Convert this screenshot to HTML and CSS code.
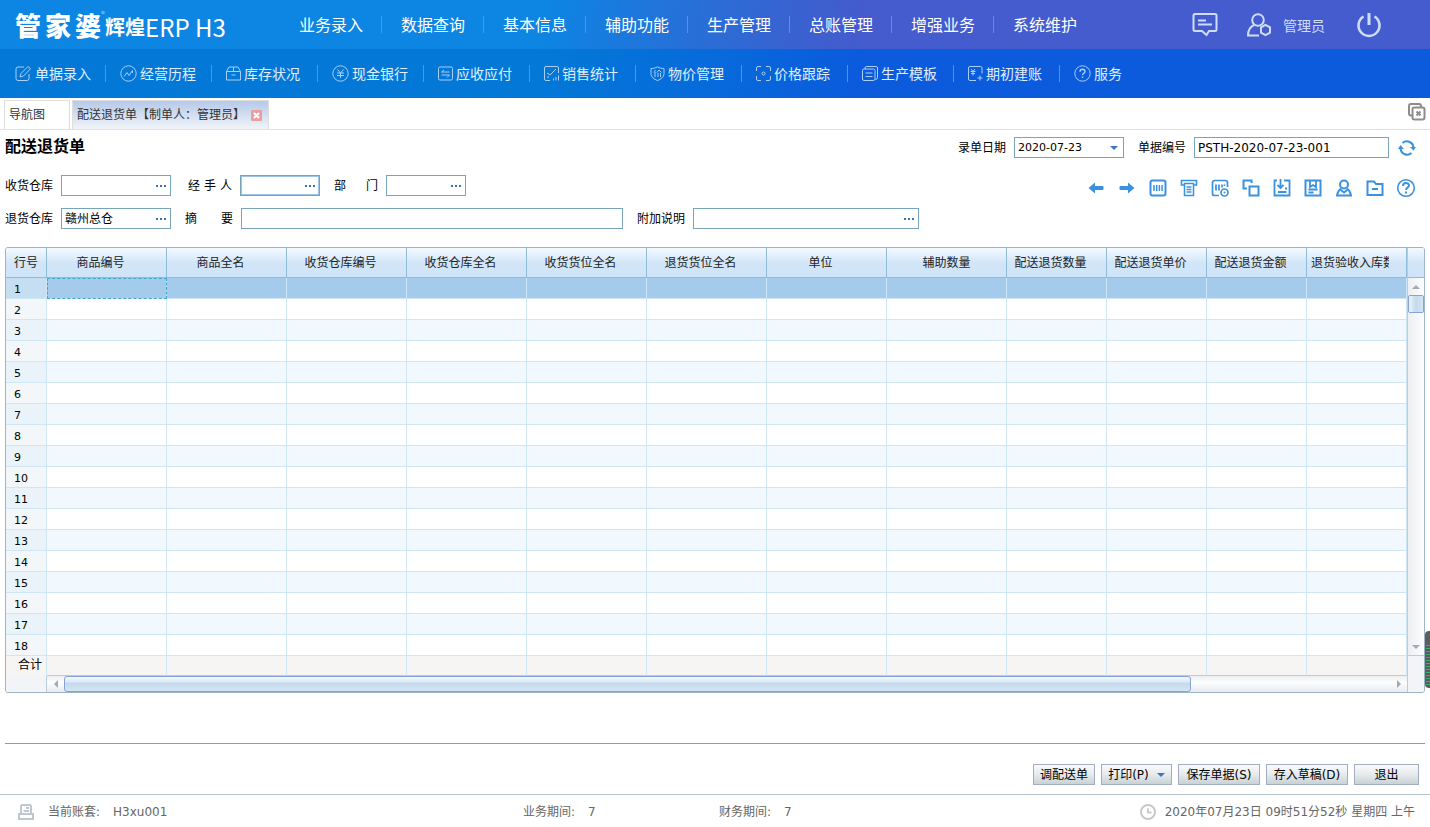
FILE: index.html
```html
<!DOCTYPE html>
<html lang="zh-CN">
<head>
    <meta charset="UTF-8">
    <title>配送退货单</title>
    <link rel="stylesheet" href="styles.css">
</head>
<body>
    <header>
        <div class="top-bar">
            <div class="logo">
                <span class="logo-name"><b>管</b><b>家</b><b>婆</b></span>
                <sup>®</sup>
                <span class="logo-sub">辉煌</span>
                <span class="logo-erp">ERP H3</span>
            </div>
            <nav class="main-nav">
                <a href="#">业务录入</a>
                <a href="#">数据查询</a>
                <a href="#">基本信息</a>
                <a href="#">辅助功能</a>
                <a href="#">生产管理</a>
                <a href="#">总账管理</a>
                <a href="#">增强业务</a>
                <a href="#">系统维护</a>
            </nav>
            <div class="user-box">
                <button class="icon-btn" aria-label="消息">
                    <svg width="26" height="26" viewBox="0 0 26 26"><path d="M3 2h20a1.5 1.5 0 0 1 1.5 1.500v14a1.5 1.5 0 0 1-1.500 1.500h-6l-2.500 4-4.500-4H3a1.5 1.5 0 0 1-1.500-1.500v-14A1.5 1.5 0 0 1 3 2z"/><path d="M6 8.500h8M6 12.500h14"/></svg>
                </button>
                <button class="icon-btn user" aria-label="用户">
                    <svg width="26" height="26" viewBox="0 0 26 26"><circle cx="12" cy="8" r="5.800"/><path d="M8 13c-4 2-6 5-6 10.500h11"/><path d="M19.500 12.800l4.500 2.600v5.200l-4.500 2.600-4.500-2.600v-5.200z"/></svg>
                </button>
                <span>管理员</span>
                <button class="icon-btn power" aria-label="退出系统">
                    <svg width="26" height="26" viewBox="0 0 26 26"><path d="M7.500 4.500a10.500 10.500 0 1 0 11 0" stroke-width="2.600"/><path d="M13 1v12" stroke-width="3"/></svg>
                </button>
            </div>
        </div>
        <nav class="sub-nav">
            <a href="#"><svg width="17" height="17" viewBox="0 0 17 17"><path d="M9 2H3a2 2 0 0 0-2 2v9.500a2 2 0 0 0 2 2h9a2 2 0 0 0 2-2V9M5 12l1-3.500L13 1.500l2.500 2.200L8.500 11z"/></svg>单据录入</a>
            <a href="#"><svg width="17" height="17" viewBox="0 0 17 17"><circle cx="8.500" cy="8.500" r="7.700"/><path d="M4 11.500l3-4 2 3 3.500-5M12.500 8V5.500"/></svg>经营历程</a>
            <a href="#"><svg width="15" height="15" viewBox="0 0 15 15"><path d="M.5 5.500h14v8.500H.5zM.5 5.500l2.500-4.500h9l2.500 4.500M7.500 1v4.500M5.500 9h4"/></svg>库存状况</a>
            <a href="#"><svg width="17" height="17" viewBox="0 0 17 17"><circle cx="8.500" cy="8.500" r="7.700"/><path d="M5.500 4.500l3 3.500 3-3.500M5 8h7M5 10.500h7M8.500 8v5"/></svg>现金银行</a>
            <a href="#"><svg width="15" height="15" viewBox="0 0 15 15"><rect x=".5" y="1" width="14" height="13" rx="1.500"/><path d="M11.500 6h-8L6 4M3.500 9h8L9 11.500"/></svg>应收应付</a>
            <a href="#"><svg width="15" height="15" viewBox="0 0 15 15"><path d="M14.500 7V2A1.5 1.5 0 0 0 13 .5H2A1.5 1.5 0 0 0 .5 2v11A1.5 1.5 0 0 0 2 14.500h4M3 7l3 2 6-6M3 11h2M9.500 12.500v2M12 11v3.500M14.500 9.500v5"/></svg>销售统计</a>
            <a href="#"><svg width="15" height="15" viewBox="0 0 15 15"><path d="M7.500 .8c2 1.200 4 1.700 6.500 1.700v5c0 3.500-3 5.700-6.500 7C4 13.200 1 11 1 7.500v-5c2.500 0 4.500-.5 6.500-1.700zM5.500 4L4 6.500M5 6v5M9 4L7 6.500M9 4l2.500 2.500M8 7v4M10.500 7v4"/></svg>物价管理</a>
            <a href="#"><svg width="15" height="15" viewBox="0 0 15 15"><path d="M5 .5H2A1.5 1.5 0 0 0 .5 2v3M10 .5h3A1.5 1.5 0 0 1 14.500 2v3M5 14.500H2A1.5 1.5 0 0 1 .5 13v-3M10 14.500h3a1.5 1.5 0 0 0 1.500-1.500v-3"/><circle cx="7.500" cy="7.500" r="1.500"/></svg>价格跟踪</a>
            <a href="#"><svg width="16" height="15" viewBox="0 0 16 15"><path d="M3 3V2A1.5 1.5 0 0 1 4.500 .5H14A1.5 1.5 0 0 1 15.500 2v9.500a2 2 0 0 1-2 2"/><rect x=".5" y="3" width="12.500" height="11.500" rx="1.500"/><path d="M3.500 7h7M3.500 10.500h7"/></svg>生产模板</a>
            <a href="#"><svg width="15" height="15" viewBox="0 0 15 15"><path d="M14 7.500V2A1.5 1.5 0 0 0 12.500 .5H2A1.5 1.5 0 0 0 .5 2v11A1.5 1.5 0 0 0 2 14.500h6M3 3l2 2.500L7 3M2.500 5.500h5M3 7.500h4M5 5.500v4M9.500 12h5M12 9.500v5"/></svg>期初建账</a>
            <a href="#"><svg width="17" height="17" viewBox="0 0 17 17"><circle cx="8.500" cy="8.500" r="7.700"/><path d="M6 6.800c0-3.500 5-3.200 5-.3 0 1.800-2.500 1.800-2.500 3.800M8.500 11.500v1.500" stroke-width="1.400"/></svg>服务</a>
        </nav>
    </header>

    <div class="tabs">
        <a class="tab" href="#">导航图</a>
        <div class="tab active">
            <a href="#">配送退货单【制单人：管理员】</a>
            <button class="tab-close" aria-label="关闭"><svg width="11" height="11" viewBox="0 0 11 11"><path d="M3 3l5 5M8 3L3 8"/></svg></button>
        </div>
        <button class="close-all" aria-label="全部关闭"><svg width="18" height="18" viewBox="0 0 18 18"><path d="M4 12.500H3a2 2 0 0 1-2-2V3a2 2 0 0 1 2-2h8a2 2 0 0 1 2 2v1"/><rect x="4.500" y="4.500" width="12" height="12" rx="2"/><path d="M8.500 8.500l4 4M12.500 8.500l-4 4"/></svg></button>
    </div>

    <main>
        <div class="title-row">
            <h1>配送退货单</h1>
            <label for="bill-date">录单日期</label>
            <div class="field field-m">
                <select id="bill-date"><option>2020-07-23</option></select>
                <svg class="caret" width="8" height="4" viewBox="0 0 8 4"><path d="M0 0h8L4 4z"/></svg>
            </div>
            <label for="bill-no">单据编号</label>
            <div class="field field-no"><input type="text" id="bill-no" value="PSTH-2020-07-23-001"></div>
            <button class="refresh" aria-label="刷新">
                <svg width="18" height="18" viewBox="0 0 18 18"><path d="M4.500 4a6.700 6.700 0 0 1 11 4M13.500 14a6.700 6.700 0 0 1-11-4"/><path class="fill" d="M12 8h6l-2.500 3.500zM0 10h6L2.500 6z"/></svg>
            </button>
        </div>

        <div class="form-row">
            <label for="in-store">收货仓库</label>
            <div class="field field-m"><input type="text" id="in-store"><button aria-label="选择收货仓库"><i></i><i></i><i></i></button></div>
            <label for="handler" class="spread label-gap">经 手 人</label>
            <div class="field field-s focus"><input type="text" id="handler"><button aria-label="选择经手人"><i></i><i></i><i></i></button></div>
            <label for="dept" class="spread">部 门</label>
            <div class="field field-s"><input type="text" id="dept"><button aria-label="选择部门"><i></i><i></i><i></i></button></div>
            <div class="tools">
                <button aria-label="上一张"><svg width="18" height="18" viewBox="0 0 18 18"><path class="fill" d="M1.500 9L8 3.500V7h7.500a1 1 0 0 1 1 1v2a1 1 0 0 1-1 1H8v3.500z"/></svg></button>
                <button aria-label="下一张"><svg width="18" height="18" viewBox="0 0 18 18"><path class="fill" d="M16.500 9L10 3.500V7H2.500a1 1 0 0 0-1 1v2a1 1 0 0 0 1 1H10v3.500z"/></svg></button>
                <button aria-label="条码"><svg width="18" height="18" viewBox="0 0 18 18"><rect x="1.500" y="1.500" width="15" height="15" rx="2"/><path d="M5 6v6M7.700 6v6M10.400 6v6M13.100 6v6" stroke-width="1.500"/></svg></button>
                <button aria-label="打印"><svg width="18" height="18" viewBox="0 0 18 18"><path d="M4 6H1.500V1.500h15V6H14" stroke-width="1.600"/><path d="M4.500 4.500v12h9v-12zM6.500 8h5M6.500 10.500h5M6.500 13h5" stroke-width="1.500"/></svg></button>
                <button aria-label="条码设置"><svg width="18" height="18" viewBox="0 0 18 18"><path d="M8 16.500H3.500a2 2 0 0 1-2-2v-11a2 2 0 0 1 2-2h11a2 2 0 0 1 2 2V8M5 5.500v6M8 5.500v6M11 5.500v3M13.500 5.500v1.500" stroke-width="1.700"/><circle cx="13.500" cy="13.500" r="3.500" stroke-width="1.700"/><circle class="fill" cx="13.500" cy="13.500" r="1"/></svg></button>
                <button aria-label="复制"><svg width="18" height="18" viewBox="0 0 18 18"><path d="M5 9.500H1.500v-8h8V4"/><rect x="7.500" y="7.500" width="9" height="9"/></svg></button>
                <button aria-label="导入"><svg width="18" height="18" viewBox="0 0 18 18"><path d="M4 1.500H1.500v15h15v-15H11M7.500 0v8M4.500 6l3 3 3-3M12 9.500h2M5 13h8.500" stroke-width="1.800"/></svg></button>
                <button aria-label="保存模板"><svg width="18" height="18" viewBox="0 0 18 18"><rect x="1.500" y="1.500" width="15" height="15"/><path d="M6 2v6l3-2 3 2V2M4.500 10.500h9M4.500 13.500h5" stroke-width="1.800"/></svg></button>
                <button aria-label="往来单位"><svg width="18" height="18" viewBox="0 0 18 18"><circle cx="9" cy="5.500" r="4"/><path d="M6 9.500c-2 1.500-3.500 4-4 7h14c-.5-3-2-5.500-4-7M6 11l3 2.500 3-2.500"/></svg></button>
                <button aria-label="附件"><svg width="18" height="18" viewBox="0 0 18 18"><path d="M1.500 16V2.500H8l2 2.500h6.500v11zM6 10h6"/></svg></button>
                <button aria-label="帮助"><svg width="20" height="20" viewBox="0 0 20 20"><circle cx="10" cy="10" r="8.300" stroke-width="1.600"/><path d="M7 8c0-4 6-3.700 6-.5 0 2-3 2.200-3 4.500M10 13.500v2"/></svg></button>
            </div>
        </div>

        <div class="form-row">
            <label for="out-store">退货仓库</label>
            <div class="field field-m"><input type="text" id="out-store" value="赣州总仓"><button aria-label="选择退货仓库"><i></i><i></i><i></i></button></div>
            <label for="summary" class="spread-wide">摘 要</label>
            <div class="field field-xl"><input type="text" id="summary"></div>
            <label for="note">附加说明</label>
            <div class="field field-l"><input type="text" id="note"><button aria-label="选择附加说明"><i></i><i></i><i></i></button></div>
        </div>

        <div class="grid">
            <table>
                <colgroup>
                    <col class="col-no">
                    <col span="8" class="col-wide">
                    <col span="3" class="col-num">
                    <col>
                </colgroup>
                <thead>
                    <tr>
                        <th>行号</th>
                        <th>商品编号</th>
                        <th>商品全名</th>
                        <th>收货仓库编号</th>
                        <th>收货仓库全名</th>
                        <th>收货货位全名</th>
                        <th>退货货位全名</th>
                        <th>单位</th>
                        <th class="center">辅助数量</th>
                        <th>配送退货数量</th>
                        <th>配送退货单价</th>
                        <th>配送退货金额</th>
                        <th class="cut"><div>退货验收入库数</div></th>
                    </tr>
                </thead>
                <tbody id="rows"></tbody>
                <tfoot>
                    <tr id="total"><th>合计</th></tr>
                </tfoot>
            </table>
            <div class="v-side">
                <div class="v-head"></div>
                <div class="v-scroll">
                    <button aria-label="向上"><svg width="8" height="4" viewBox="0 0 8 4"><path d="M0 4h8L4 0z"/></svg></button>
                    <div class="v-thumb"></div>
                    <button class="end" aria-label="向下"><svg width="8" height="4" viewBox="0 0 8 4"><path d="M0 0h8L4 4z"/></svg></button>
                </div>
            </div>
            <div class="h-side">
                <div class="h-scroll">
                    <button aria-label="向左"><svg width="4" height="8" viewBox="0 0 4 8"><path d="M4 0v8L0 4z"/></svg></button>
                    <div class="h-track"><div class="h-thumb"></div></div>
                    <button aria-label="向右"><svg width="4" height="8" viewBox="0 0 4 8"><path d="M0 0v8l4-4z"/></svg></button>
                </div>
            </div>
            <div class="corner"></div>
        </div>

        <div class="actions">
            <button>调配送单</button>
            <button class="btn-print">打印(P)<svg class="caret" width="8" height="4" viewBox="0 0 8 4"><path d="M0 0h8L4 4z"/></svg></button>
            <button class="btn-wide">保存单据(S)</button>
            <button class="btn-wide">存入草稿(D)</button>
            <button class="btn-exit">退出</button>
        </div>
    </main>

    <footer>
        <div class="status">
            <svg width="16" height="16" viewBox="0 0 16 16"><path d="M3 9V2.500A1.5 1.5 0 0 1 4.500 1h7A1.5 1.5 0 0 1 13 2.500V9M1 10h14v5H1zM8 4h3M5.500 7H11"/></svg>
            <span>当前账套:</span><span>H3xu001</span>
        </div>
        <div class="status"><span>业务期间:</span><span>7</span></div>
        <div class="status"><span>财务期间:</span><span>7</span></div>
        <div class="clock">
            <svg width="16" height="16" viewBox="0 0 16 16"><circle cx="8" cy="8" r="7"/><path d="M8 4.500v4h3.500"/></svg>
            <span>2020年07月23日 09时51分52秒 星期四 上午</span>
        </div>
    </footer>

    <div class="meter"></div>

    <script>
        const ROWS = 18;
        const COLS = 12;
        const rows = document.getElementById('rows');

        function addCells(tr) {
            for (let c = 0; c < COLS; c++) {
                tr.appendChild(document.createElement('td'));
            }
        }

        for (let r = 1; r <= ROWS; r++) {
            const tr = document.createElement('tr');
            const th = document.createElement('th');
            th.textContent = r;
            tr.appendChild(th);
            addCells(tr);
            rows.appendChild(tr);
        }
        rows.rows[0].className = 'selected';
        addCells(document.getElementById('total'));
    </script>
</body>
</html>
```

FILE: styles.css
```css
* {
box-sizing: border-box;
}

body {
margin: 0;
min-height: 100vh;
display: flex;
flex-direction: column;
font-family: "DejaVu Sans", "Noto Sans CJK SC", sans-serif;
font-size: 12px;
line-height: 20px;
color: #000;
background: #fff;
}

a {
color: inherit;
text-decoration: none;
}

button, input, select {
font: inherit;
color: inherit;
margin: 0;
padding: 0;
border: none;
background: none;
}

button {
cursor: pointer;
}

svg {
display: block;
flex: none;
fill: none;
stroke: currentColor;
}

/* header */
header {
font-family: "Noto Sans CJK SC", sans-serif;
color: #fff;
}

.top-bar {
display: flex;
align-items: center;
height: 49px;
padding-left: 15px;
background: linear-gradient(100deg, #0d85e3 38%, #2670d8 48%, #3b61d0 56%, #445ccd 60%);
}

.logo {
display: flex;
align-items: center;
width: 268px;
white-space: nowrap;
}

.logo-name {
display: flex;
gap: 4px;
font-size: 26px;
}

.logo-name b {
font-weight: 900;
}

.logo sup {
align-self: flex-start;
font-size: 8px;
line-height: 8px;
margin-top: -3px;
width: 4px;
opacity: 0.6;
}

.logo-sub {
font-size: 20px;
font-weight: bold;
padding-top: 4px;
}

.logo-erp {
font-size: 24px;
padding-top: 4px;
}

.main-nav {
display: flex;
}

.main-nav a {
width: 102px;
padding-left: 19px;
font-size: 16px;
line-height: 17px;
font-weight: 400;
white-space: nowrap;
}

.main-nav a + a, .sub-nav a + a {
border-left: 1px solid #3c9cf0;
}

.main-nav a:first-child {
width: 98px;
padding-left: 16px;
}

.user-box {
display: flex;
align-items: center;
margin-left: auto;
padding-right: 48px;
font-size: 14px;
color: #cfdcfb;
}

.icon-btn svg {
stroke-width: 2;
}

.icon-btn.user {
margin: 0 11px 0 28px;
}

.icon-btn.power {
margin-left: 31px;
}

.sub-nav {
display: flex;
align-items: center;
height: 49px;
background: linear-gradient(100deg, #0378d7 38%, #076adb 50%, #0b5bdc 60%);
}

.sub-nav a {
display: flex;
align-items: center;
gap: 3px;
width: 106px;
padding-left: 14px;
font-size: 14px;
line-height: 17px;
height: 17px;
white-space: nowrap;
color: #e0efff;
}

.sub-nav a:first-child {
width: 105px;
padding-left: 15px;
}

.sub-nav svg {
color: #a9cff5;
}

/* tabs */
.tabs {
display: flex;
align-items: flex-end;
height: 32px;
padding: 0 4px;
border-bottom: 1px solid #e2e2e2;
}

.tab {
display: flex;
align-items: center;
height: 29px;
width: 66px;
margin-right: 2px;
padding: 0 4px;
border: 1px solid #dedede;
border-bottom: none;
color: #333;
white-space: nowrap;
}

.tab.active {
width: auto;
gap: 6px;
padding-right: 6px;
background: linear-gradient(#b5c9e9, #f1f4f9);
}

.tab-close {
background: #ee9d9d;
color: #fff;
border-radius: 1px;
}

.tab-close svg {
stroke-width: 2;
}

.close-all {
margin: 0 0 8px auto;
color: #8c8c8c;
}

.close-all svg {
stroke-width: 2;
}

/* form */
main {
flex: 1;
display: flex;
flex-direction: column;
padding: 7px 5px 0;
}

.title-row, .form-row {
display: flex;
align-items: center;
height: 21px;
white-space: nowrap;
}

.title-row {
margin-bottom: 17px;
}

.form-row {
margin-bottom: 12px;
}

h1 {
align-self: flex-start;
margin: 0 auto 0 0;
font-family: "Noto Sans CJK SC", sans-serif;
font-size: 16px;
line-height: 16px;
font-weight: bold;
}

label {
width: 48px;
margin-right: 8px;
}

.field + label {
margin-left: 14px;
}

.field + .label-gap {
margin-left: 17px;
}

.spread {
width: 44px;
text-align-last: justify;
}

.spread-wide {
width: 48px;
text-align-last: justify;
}

.field {
display: flex;
align-items: center;
height: 21px;
border: 1px solid #77a3bb;
background: #fff;
}

.field input, .field select {
flex: 1;
min-width: 0;
height: 19px;
padding: 0 3px;
outline: none;
appearance: none;
}

.field select {
font-size: 11px;
}

.field.focus {
box-shadow: inset 0 0 0 1px #9cc4e8;
}

.field-s {
width: 80px;
}

.field-m {
width: 110px;
}

.field-l {
width: 226px;
}

.field-xl {
width: 382px;
}

.field-no {
width: 195px;
}

.field button {
display: flex;
gap: 2px;
padding: 8px 4px;
}

.field i {
width: 2px;
height: 2px;
background: #3f6fb5;
}

.caret {
fill: #3f75c0;
stroke: none;
}

.field .caret {
margin-right: 5px;
pointer-events: none;
}

.refresh, .tools {
color: #3a92df;
}

.refresh {
margin: 0 9px;
}

.tools {
display: flex;
align-items: center;
margin: 4px 4px 0 auto;
}

.tools button {
display: flex;
justify-content: center;
width: 31px;
}

.refresh svg, .tools svg {
stroke-width: 2;
}

.refresh svg .fill, .tools svg .fill {
fill: currentColor;
stroke: none;
}

/* grid */
.grid {
display: grid;
grid-template-columns: 1fr 17px;
margin-top: 6px;
border: 1px solid #9db3c6;
border-radius: 3px;
overflow: hidden;
}

table {
width: 100%;
table-layout: fixed;
border-collapse: separate;
border-spacing: 0;
}

.col-no {
width: 41px;
}

.col-wide {
width: 120px;
}

.col-num {
width: 100px;
}

th, td {
padding: 0;
font-weight: normal;
border-right: 1px solid #cfe6f7;
border-bottom: 1px solid #cfe6f7;
white-space: nowrap;
overflow: hidden;
}

thead th {
height: 30px;
color: #222;
padding-right: 12px;
background: linear-gradient(#f4f9ff, #e4f0fd 25%, #d3e6f8 50%, #cfe4f9);
border-right-color: #8fbcd8;
border-bottom-color: #8fbcd8;
}

thead th:first-child, thead .center {
padding-right: 0;
}

thead .cut {
padding: 0 17px 0 4px;
}

.cut div {
overflow: hidden;
}

tbody th, tbody td {
height: 21px;
}

tbody th {
padding: 3px 0 0 8px;
font-size: 11px;
line-height: 17px;
text-align: left;
background: #f3f7fa;
}

tbody tr:nth-child(odd) td {
background: #f1f9ff;
}

tbody tr:nth-child(odd) th {
background: #eaf3fa;
}

tbody tr.selected th {
background: #c6def1;
}

tbody tr.selected td {
background: #a4cbeb;
}

.selected th + td {
outline: 1px dashed #3fa9c9;
outline-offset: -1px;
}

tfoot th, tfoot td {
height: 20px;
line-height: 19px;
background: #f7f5f3;
border-bottom-color: #b9cbdd;
}

tfoot th {
padding-left: 8px;
border-bottom-color: #f7f5f3;
}

.v-side {
display: flex;
flex-direction: column;
border-left: 1px solid #b9cbdd;
background: #f2f4f8;
}

.v-head {
height: 30px;
background: linear-gradient(#f4f9ff, #e4f0fd 25%, #d3e6f8 50%, #cfe4f9);
border-bottom: 1px solid #8fbcd8;
}

.v-scroll {
flex: 1;
display: flex;
flex-direction: column;
margin-bottom: 20px;
border-bottom: 1px solid #b9cbdd;
background: linear-gradient(90deg, #edeef1, #fcfdfd);
}

.v-scroll button, .h-scroll button {
display: flex;
align-items: center;
justify-content: center;
width: 16px;
height: 17px;
}

.v-scroll svg, .h-scroll svg {
fill: #a2aab4;
stroke: none;
}

.v-scroll .end {
margin-top: auto;
}

.v-thumb {
height: 18px;
border: 1px solid #86a3d6;
border-radius: 2px;
background: linear-gradient(90deg, #eef5fb, #c3d9ed 50%, #d5e5f2);
}

.h-side {
padding-left: 40px;
background: #f2f4f8;
}

.h-scroll {
display: flex;
height: 16px;
border-left: 1px solid #b9cbdd;
background: linear-gradient(#edeef1, #fcfdfd 40%, #e9ebf0);
}

.h-scroll button {
width: 17px;
height: 16px;
}

.h-track {
flex: 1;
}

.h-thumb {
width: 85%;
height: 16px;
border: 1px solid #86a3d6;
border-radius: 3px;
background: linear-gradient(#f3f8fc, #dce9f5 35%, #c3d9ed 45%, #d5e5f2);
}

.corner {
background: #f2f4f8;
border-left: 1px solid #b9cbdd;
}

/* bottom */
.actions {
display: flex;
justify-content: flex-end;
gap: 6px;
margin-top: 50px;
padding: 20px 6px 9px;
border-top: 1px solid #77a3bb;
}

.actions button {
display: flex;
align-items: center;
justify-content: center;
height: 21px;
padding: 0 6px;
border: 1px solid #a3adc0;
background: linear-gradient(#f9fbfb, #e6eaec 50%, #c9d2d5);
white-space: nowrap;
}

.actions .btn-print {
gap: 8px;
width: 71px;
}

.actions .btn-wide {
width: 82px;
}

.actions .btn-exit {
width: 65px;
}

footer {
display: grid;
grid-template-columns: 505px 196px 1fr auto;
align-items: center;
height: 33px;
padding: 1px 15px 0 18px;
border-top: 1px solid #b9c3ca;
color: #666;
}

.status {
display: flex;
align-items: center;
gap: 13px;
}

.status svg {
margin-right: 1px;
color: #c0c5d2;
stroke-width: 2;
}

.clock {
display: flex;
align-items: center;
gap: 9px;
}

.clock svg {
color: #c9c9c9;
stroke-width: 2;
}

.meter {
position: fixed;
right: 0;
top: 631px;
width: 5px;
height: 57px;
padding: 14px 0 2px 1px;
border-radius: 4px 0 0 4px;
background: repeating-linear-gradient(#35b56a 0 1px, #5a5a5a 1px 3px) content-box, #5e5e5e;
}
```
